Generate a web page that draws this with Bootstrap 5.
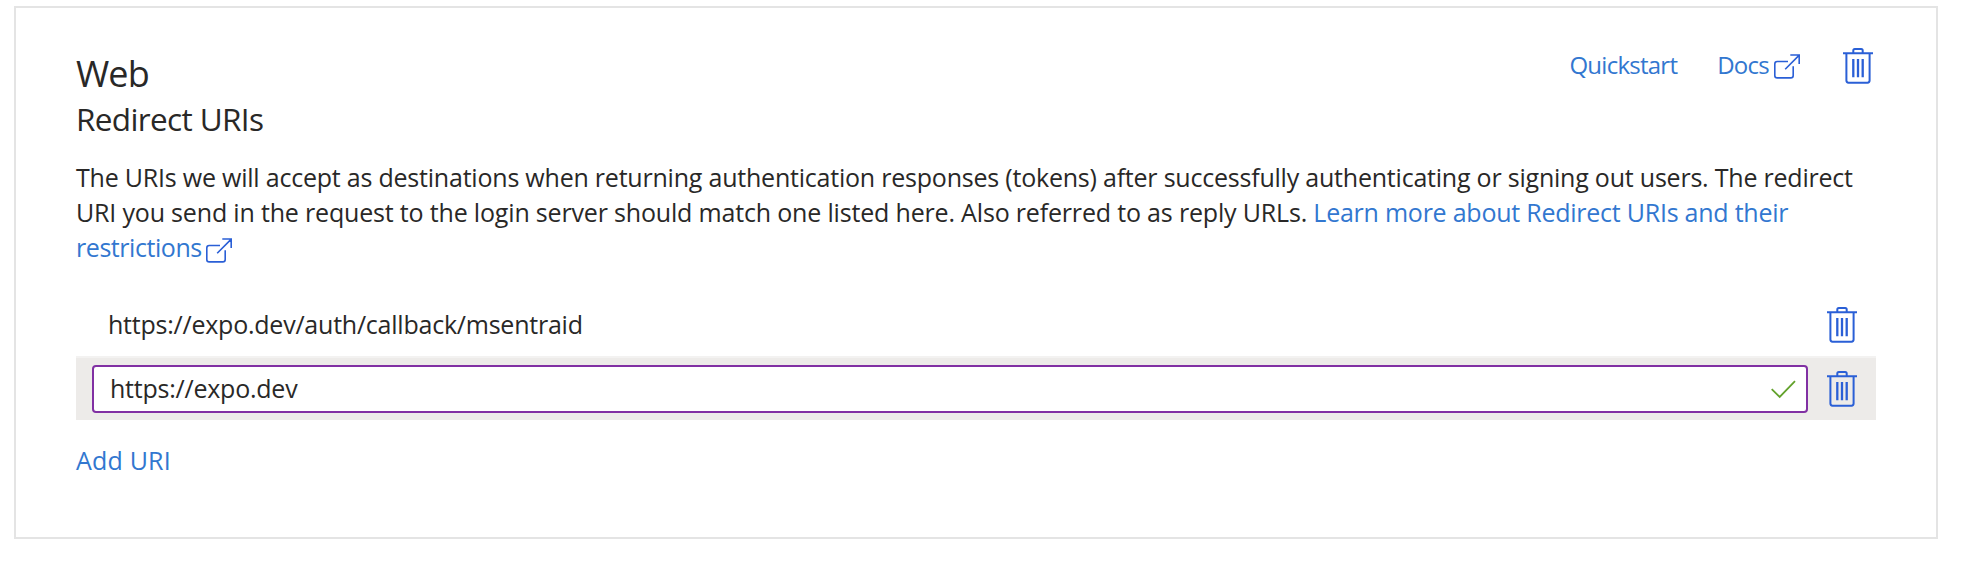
<!DOCTYPE html>
<html lang="en">
<head>
<meta charset="utf-8">
<meta name="viewport" content="width=device-width, initial-scale=1">
<title>Web redirect URIs</title>
<link href="https://cdn.jsdelivr.net/npm/bootstrap@5.3.0/dist/css/bootstrap.min.css" rel="stylesheet">
<style>
  body { font-family: "Open Sans", "Noto Sans", sans-serif; font-size: 25px; line-height: 35px; color: #292827; background: #fff; padding: 6px 46px 0 14px; }
  a { color: #3277d0; text-decoration: none; }
  svg { display: block; fill: none; stroke: #2a5fd6; flex: none; }
  .platform { height: 533px; border: 2px solid #e4e4e4; border-radius: 0; padding: 40px 60px 0; }
  .platform h1 { font-size: 36px; line-height: 44px; font-weight: 400; letter-spacing: -.9px; margin: 4px 0 1px; }
  .platform h2 { font-size: 31.5px; line-height: 44px; font-weight: 400; letter-spacing: -.64px; margin: 0 0 19px; }
  .actions { font-size: 24px; line-height: 34px; letter-spacing: -.75px; margin-right: 3px; }
  .docs { margin-left: 40px; gap: 5px; }
  .docs svg { margin-top: 2px; }
  .actions .trash { margin-left: 42px; }
  .intro { white-space: nowrap; margin: 0 0 27px; }
  .line-a { letter-spacing: -.215px; }
  .line-b { letter-spacing: -.175px; }
  .line-c { letter-spacing: -.24px; }
  .line-d { letter-spacing: -.44px; }
  .intro svg { display: inline-block; margin-left: 4px; vertical-align: -6px; }
  .uri-row { height: 64px; padding: 0 19px 0 16px; letter-spacing: -.23px; }
  .uri-text { padding-left: 16px; }
  .uri-text + .trash { margin-top: 2px; }
  .uri-edit { background: #edebe9; border-top: 2px solid #f3f2f1; }
  .uri-edit .trash { margin-top: -1px; }
  .uri-input { height: 48px; margin-top: -1px; border: 2px solid #8130a3; border-radius: 4px; background: #fff; padding: 0 10px 0 16px; margin-right: 19px; }
  .uri-input svg { stroke: #63a22c; margin-top: 1px; }
  .add-uri { margin-top: 23px; letter-spacing: .2px; }
</style>
</head>
<body>
<svg width="0" height="0" class="position-absolute">
  <symbol id="trash" viewBox="0 0 30 36">
    <path stroke-width="2" d="M0 5.3H30M10.3 5V2.5Q10.3 1 11.8 1H18.2Q19.7 1 19.7 2.5V5M3.4 5.5V32.6Q3.4 34.7 5.5 34.7H24.5Q26.6 34.7 26.6 32.6V5.5"/>
    <path stroke-width="2.3" d="M10.3 11V29.3M15 11V29.3M19.7 11V29.3"/>
  </symbol>
  <symbol id="external" viewBox="0 0 27 25">
    <path stroke-width="1.6" d="M14 7.5H3.2Q.8 7.5 .8 9.9V21.5Q.8 23.9 3.2 23.9H16.8Q19.2 23.9 19.2 21.5V12.2M11.2 15.3L25 1.4M16.3 1H25.2V10"/>
  </symbol>
</svg>

<main class="platform card">
  <div class="d-flex justify-content-between align-items-start">
    <h1>Web</h1>
    <div class="actions d-flex align-items-start">
      <a href="#">Quickstart</a>
      <a href="#" class="docs d-flex align-items-center">Docs <svg width="27" height="25"><use href="#external"/></svg></a>
      <svg class="trash" width="30" height="36"><use href="#trash"/></svg>
    </div>
  </div>
  <h2>Redirect URIs</h2>
  <p class="intro"><span class="line-a">The URIs we will accept as destinations when returning authentication responses (tokens) after successfully authenticating or signing out users. The redirect</span><br><span class="line-b">URI you send in the request to the login server should match one listed here. Also referred to as reply URLs. </span><a href="#"><span class="line-c">Learn more about Redirect URIs and their</span><br><span class="line-d">restrictions</span><svg width="27" height="25"><use href="#external"/></svg></a></p>
  <div class="uri-row d-flex align-items-center justify-content-between">
    <span class="uri-text">https://expo.dev/auth/callback/msentraid</span>
    <svg class="trash" width="30" height="36"><use href="#trash"/></svg>
  </div>
  <div class="uri-row uri-edit d-flex align-items-center">
    <div class="uri-input flex-grow-1 d-flex align-items-center justify-content-between">
      <span>https://expo.dev</span>
      <svg width="25" height="19" viewBox="0 0 25 19"><path stroke-width="1.8" d="M.7 9.2L8.7 17L24 1.2"/></svg>
    </div>
    <svg class="trash" width="30" height="36"><use href="#trash"/></svg>
  </div>
  <div class="add-uri"><a href="#">Add URI</a></div>
</main>
<script src="https://cdn.jsdelivr.net/npm/bootstrap@5.3.0/dist/js/bootstrap.bundle.min.js"></script>
</body>
</html>
